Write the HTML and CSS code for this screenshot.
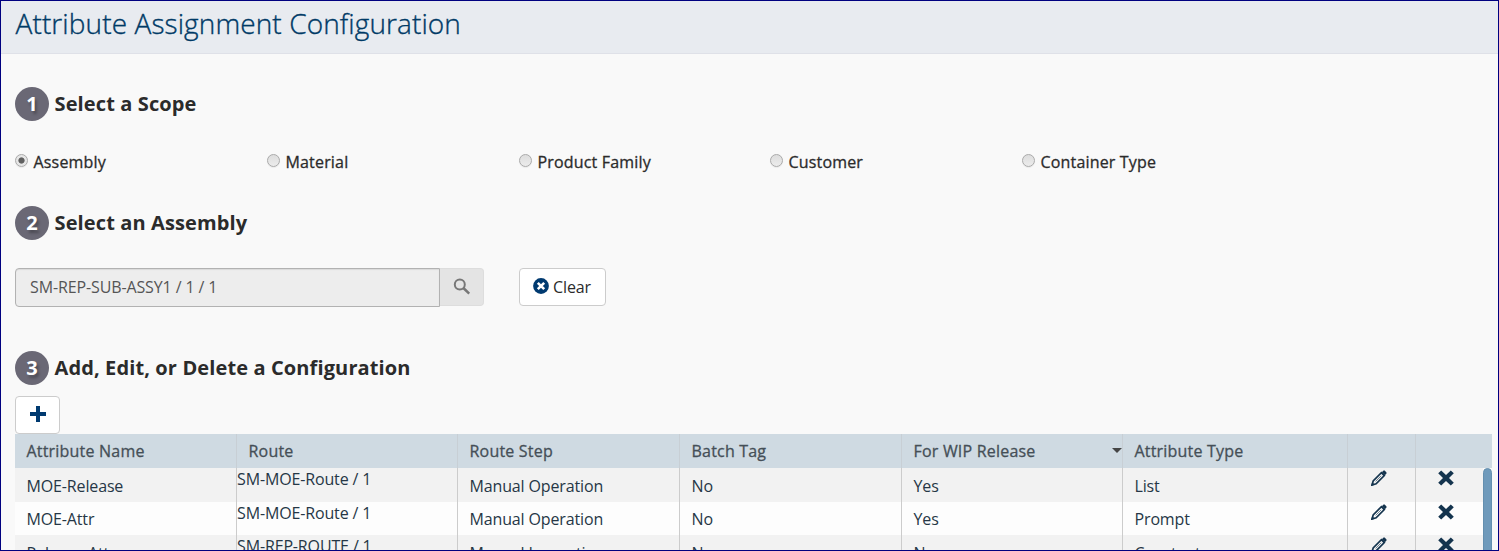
FILE: index.html
```html
<!DOCTYPE html>
<html lang="en">
<head>
<meta charset="utf-8">
<title>Attribute Assignment Configuration</title>
<link rel="stylesheet" href="styles.css">
</head>
<body>
<svg class="defs" aria-hidden="true">
  <symbol id="pencil" viewBox="0 0 16 16">
    <path d="M1 15 L2.2 10.9 L10.4 2.7 L13.3 5.6 L5.1 13.8 Z" fill="none" stroke="#14344e" stroke-width="1.7"/>
    <path d="M10.8 2.2 L12.3 .7 Q13 0 13.8 .7 L15.3 2.2 Q16 3 15.3 3.7 L13.8 5.2 Z M0 16 L1.2 12.2 L3.8 14.8 Z"/>
    <path d="M4.6 11.4 L10.2 5.8" fill="none" stroke="#14344e" stroke-width=".6"/>
  </symbol>
  <symbol id="cross" viewBox="0 0 16 16">
    <path d="M3.2 .4 L8 5.1 L12.8 .4 L15.8 3.3 L11 8 L15.8 12.7 L12.8 15.6 L8 10.9 L3.2 15.6 L.2 12.7 L5 8 L.2 3.3 Z"/>
  </symbol>
</svg>
<div class="page">
  <header class="titlebar"><h1>Attribute Assignment Configuration</h1></header>
  <main class="content">
    <h2 class="step"><span class="badge">1</span><span>Select a Scope</span></h2>
    <div class="scopes">
      <label><i class="radio on"></i><span>Assembly</span></label>
      <label><i class="radio"></i><span>Material</span></label>
      <label><i class="radio"></i><span>Product Family</span></label>
      <label><i class="radio"></i><span>Customer</span></label>
      <label><i class="radio"></i><span>Container Type</span></label>
    </div>
    <h2 class="step second"><span class="badge">2</span><span>Select an Assembly</span></h2>
    <div class="picker">
      <div class="field">SM-REP-SUB-ASSY1 / 1 / 1</div>
      <div class="search"><svg width="18" height="18" viewBox="0 0 18 18"><circle cx="6.8" cy="6.4" r="5" fill="none" stroke="#777" stroke-width="2"/><path d="M10.4 10 L16.2 15.6" stroke="#777" stroke-width="2.5"/></svg></div>
      <div class="clear"><svg width="16" height="16" viewBox="0 0 16 16"><circle cx="8" cy="8" r="7.9" fill="#003a70"/><path d="M4.8 4.8 L11.2 11.2 M11.2 4.8 L4.8 11.2" stroke="#fff" stroke-width="2.6"/></svg><span>Clear</span></div>
    </div>
    <h2 class="step third"><span class="badge">3</span><span>Add, Edit, or Delete a Configuration</span></h2>
    <div class="add"><svg width="16" height="16" viewBox="0 0 16 16"><path d="M8 0 V16 M0 8 H16" stroke="#003a70" stroke-width="4"/></svg></div>
    <div class="grid">
      <div class="row head">
        <div>Attribute Name</div><div>Route</div><div>Route Step</div><div>Batch Tag</div><div class="sorted">For WIP Release<i class="caret"></i></div><div>Attribute Type</div><div></div><div></div>
      </div>
      <div class="body">
        <div class="rows">
          <div class="row odd"><div>MOE-Release</div><div class="flush">SM-MOE-Route / 1</div><div>Manual Operation</div><div>No</div><div>Yes</div><div>List</div><div class="act"><svg><use href="#pencil"/></svg></div><div class="act"><svg><use href="#cross"/></svg></div></div>
          <div class="row even"><div>MOE-Attr</div><div class="flush">SM-MOE-Route / 1</div><div>Manual Operation</div><div>No</div><div>Yes</div><div>Prompt</div><div class="act"><svg><use href="#pencil"/></svg></div><div class="act"><svg><use href="#cross"/></svg></div></div>
          <div class="row odd"><div>Release-Attr</div><div class="flush">SM-REP-ROUTE / 1</div><div>Manual Inspection</div><div>No</div><div>No</div><div>Constant</div><div class="act"><svg><use href="#pencil"/></svg></div><div class="act"><svg><use href="#cross"/></svg></div></div>
        </div>
        <div class="thumb"></div>
      </div>
    </div>
  </main>
</div>
</body>
</html>
```
FILE: styles.css
```css
* { box-sizing: border-box; }
body { margin: 0; font-family: "Open Sans", sans-serif; font-size: 16px; color: #2b2b2b; }
.defs { display: none; }
.page { width: 1499px; height: 551px; border: 1px solid #000080; background: #f9f9f9; overflow: hidden; }
.titlebar { height: 53px; background: #e8ebf0; border-bottom: 1px solid #dfe1e8; padding: 4px 0 0 14.5px; }
h1 { margin: 0; font-size: 28px; line-height: 36px; font-weight: 300; letter-spacing: .1px; color: #003a66; white-space: nowrap; -webkit-text-stroke: .35px #003a66; }
.content { padding: 33px 6px 0 14px; }
.step { display: flex; align-items: center; gap: 5.5px; height: 34px; margin: 0; font-size: 20px; line-height: 34px; font-weight: 700; letter-spacing: .12px; white-space: nowrap; }
.badge { width: 34px; height: 34px; border-radius: 50%; background: #6a6875; color: #fff; text-align: center; line-height: 34px; text-shadow: 2px 3px 3px rgba(0, 0, 0, .3); }
.scopes { display: grid; grid-template-columns: 252px 252px 251px 252px auto; margin-top: 29px; height: 24px; font-size: 16px; line-height: 24px; letter-spacing: .17px; -webkit-text-stroke: .3px #2b2b2b; }
.scopes label { display: flex; gap: 5.5px; white-space: nowrap; }
.radio { width: 13px; height: 13px; margin-top: 4px; border: 1px solid #aaa; border-radius: 50%; background: linear-gradient(#ddd, #ececec); box-shadow: 0 1px 1px rgba(0, 0, 0, .06); }
.radio.on { background: radial-gradient(circle, #606060 0 2.7px, #e6e6e6 3.5px); }
.second { margin-top: 32px; }
.picker { display: flex; margin-top: 28px; height: 39px; align-items: flex-start; line-height: 37px; font-size: 16px; letter-spacing: -.12px; }
.field { width: 425px; height: 39px; border: 1px solid #b2b2b2; border-radius: 4px 0 0 4px; background: #ededed; padding-left: 14px; color: #555; box-shadow: inset 0 1px 1px rgba(0, 0, 0, .08); }
.search { width: 44px; height: 38px; background: #e4e4e4; border: 1px solid #ddd; border-left: 0; border-radius: 0 4px 4px 0; padding: 9px 0 0 13px; line-height: 0; }
.clear { display: flex; gap: 4px; width: 87px; height: 38px; margin-left: 35px; border: 1px solid #ccc; border-radius: 4px; background: #fff; padding-left: 13px; }
.clear svg { margin-top: 9px; }
.third { margin-top: 44px; }
.add { width: 45px; height: 38px; margin-top: 11px; border: 1px solid #ccc; border-radius: 4px; background: #fff; padding: 9px 0 0 14px; line-height: 0; }
.row { display: grid; grid-template-columns: 222px 221px 222px 222px 221px 225px 68px 76px; white-space: nowrap; color: #263746; letter-spacing: -.14px; }
.row > div { border-right: 1px solid #ccc; padding-left: 11.5px; overflow: hidden; }
.row > div:last-child { border-right: 0; }
.head { width: 1477px; height: 34px; background: #cfdae2; color: #454f57; line-height: 34px; letter-spacing: .2px; -webkit-text-stroke: .3px #454f57; }
.sorted { display: flex; justify-content: space-between; align-items: center; }
.caret { border: 5px solid transparent; border-top-color: #454545; border-bottom: 0; margin-bottom: 2px; }
.body { display: flex; height: 82px; overflow: hidden; }
.rows { width: 1468px; }
.rows .row { grid-template-columns: 222px 221px 222px 222px 221px 225px 68px 67px; height: 34px; line-height: 36px; }
.rows .even { height: 33px; line-height: 35px; }
.odd { background: #f2f2f2; }
.even { background: #fdfdfd; }
.row > .flush { padding-left: 0; line-height: 22px; }
.row > .act { padding: 2px 0 0 23px; line-height: 0; }
.row > .act:last-child { padding-left: 22px; }
.act svg { width: 16px; height: 16px; fill: #14344e; }
.thumb { width: 9px; height: 120px; border-radius: 5px 5px 0 0; background: #6f9abb; border: 1px solid #648faf; }
.head > div { border-right-color: #c8cfd5; }
```
